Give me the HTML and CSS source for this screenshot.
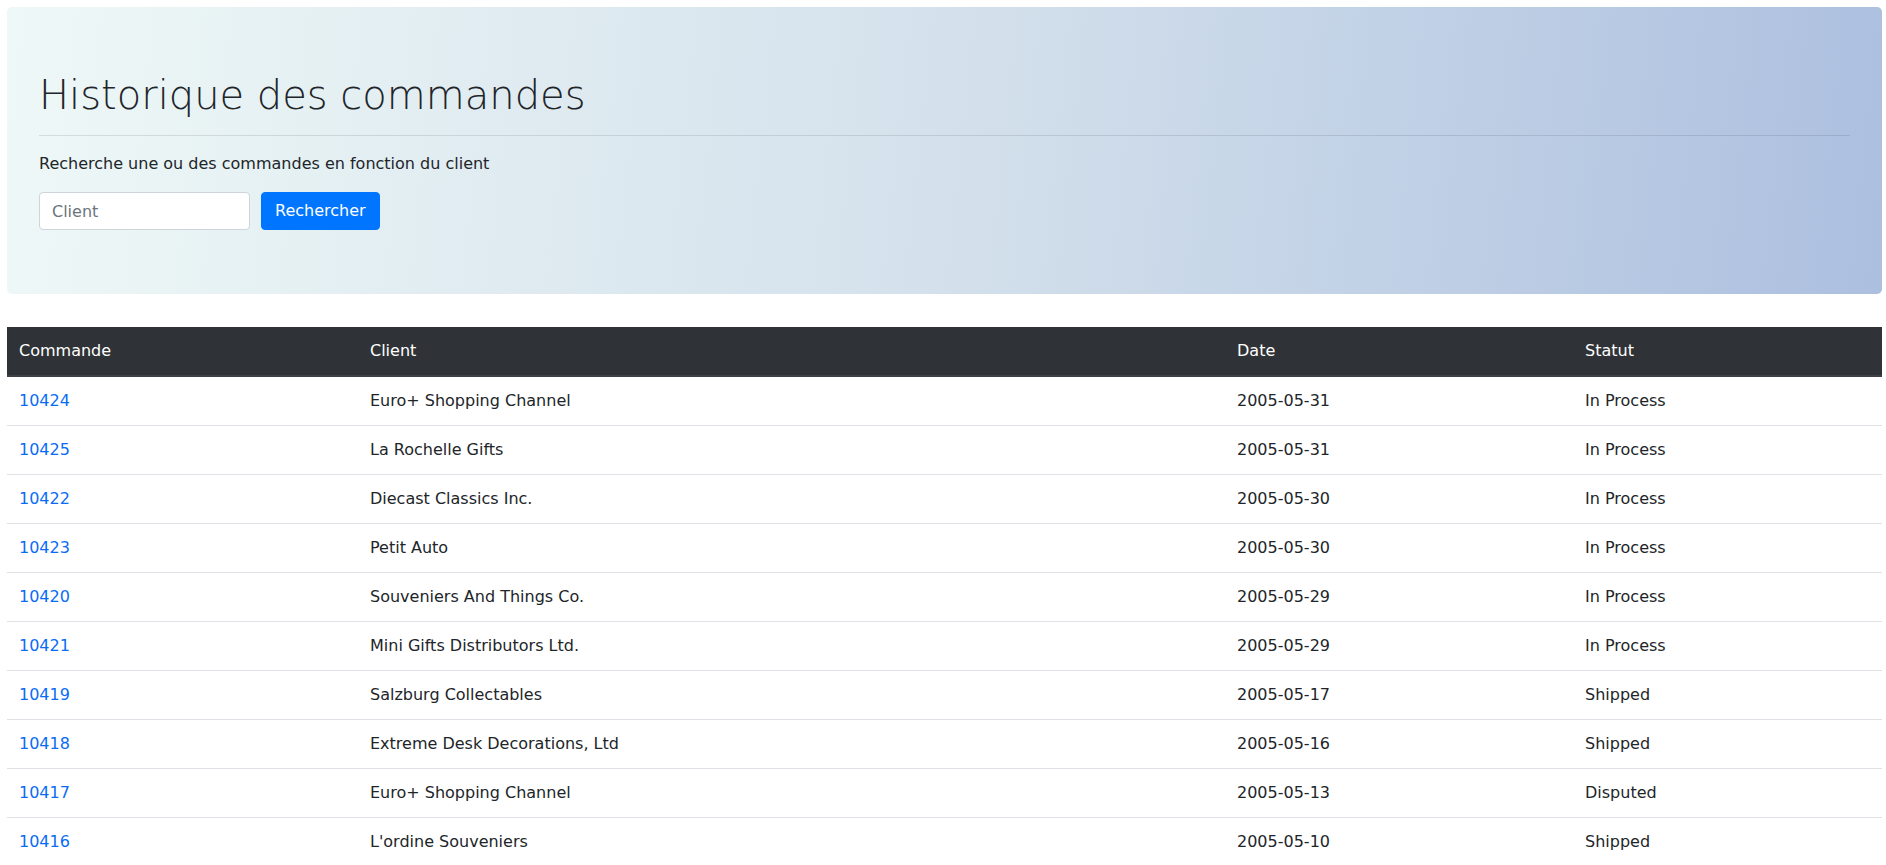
FILE: index.html
```html
<!DOCTYPE html>
<html lang="fr">
<head>
<meta charset="utf-8">
<title>Historique des commandes</title>
<link rel="stylesheet" href="styles.css">
</head>
<body>
<div class="page">
  <section class="jumbotron">
    <h1 class="title">Historique des commandes</h1>
    <hr class="divider">
    <p class="lead-text">Recherche une ou des commandes en fonction du client</p>
    <form class="search">
      <input class="field" type="text" placeholder="Client">
      <button class="btn" type="button">Rechercher</button>
    </form>
  </section>
  <table class="orders">
    <colgroup>
      <col class="c1"><col class="c2"><col class="c3"><col class="c4">
    </colgroup>
    <thead>
      <tr><th>Commande</th><th>Client</th><th>Date</th><th>Statut</th></tr>
    </thead>
    <tbody>
      <tr><td><a href="#">10424</a></td><td>Euro+ Shopping Channel</td><td>2005-05-31</td><td>In Process</td></tr>
      <tr><td><a href="#">10425</a></td><td>La Rochelle Gifts</td><td>2005-05-31</td><td>In Process</td></tr>
      <tr><td><a href="#">10422</a></td><td>Diecast Classics Inc.</td><td>2005-05-30</td><td>In Process</td></tr>
      <tr><td><a href="#">10423</a></td><td>Petit Auto</td><td>2005-05-30</td><td>In Process</td></tr>
      <tr><td><a href="#">10420</a></td><td>Souveniers And Things Co.</td><td>2005-05-29</td><td>In Process</td></tr>
      <tr><td><a href="#">10421</a></td><td>Mini Gifts Distributors Ltd.</td><td>2005-05-29</td><td>In Process</td></tr>
      <tr><td><a href="#">10419</a></td><td>Salzburg Collectables</td><td>2005-05-17</td><td>Shipped</td></tr>
      <tr><td><a href="#">10418</a></td><td>Extreme Desk Decorations, Ltd</td><td>2005-05-16</td><td>Shipped</td></tr>
      <tr><td><a href="#">10417</a></td><td>Euro+ Shopping Channel</td><td>2005-05-13</td><td>Disputed</td></tr>
      <tr><td><a href="#">10416</a></td><td>L'ordine Souveniers</td><td>2005-05-10</td><td>Shipped</td></tr>
    </tbody>
  </table>
</div>
</body>
</html>
```
FILE: styles.css
```css
* { box-sizing: border-box; }
html, body { margin: 0; padding: 0; }
body {
  font-family: "DejaVu Sans", "Open Sans", sans-serif;
  font-size: 16px;
  line-height: 1.5;
  color: #212529;
  background: #fff;
}
.page { padding: 7px 4px 0 7px; }
.jumbotron {
  padding: 64px 32px;
  margin-bottom: 33px;
  border-radius: 5px;
  background: linear-gradient(96deg, #eef8f7 0%, #d4e1ec 50%, #acbfdf 100%);
}
.title {
  margin: 0 0 8px;
  font-size: 40px;
  font-weight: 200;
  line-height: 1.2;
  color: #212529;
}
.divider {
  margin: 16px 0;
  border: 0;
  border-top: 1px solid rgba(0, 0, 0, 0.1);
}
.lead-text { margin: 0 0 16px; }
.search { display: flex; gap: 11px; margin: 0; }
.field {
  width: 211px;
  height: 38px;
  padding: 6px 12px;
  font: inherit;
  color: #495057;
  background: #fff;
  border: 1px solid #ced4da;
  border-radius: 4px;
}
.field::placeholder { color: #6c757d; }
.btn {
  height: 38px;
  padding: 6px 13px;
  font: inherit;
  color: #fff;
  background: #0075ff;
  border: 1px solid #0075ff;
  border-radius: 4px;
}
.orders { width: 100%; border-collapse: collapse; table-layout: fixed; }
.c1 { width: 351px; }
.c2 { width: 867px; }
.c3 { width: 348px; }
.c4 { width: auto; }
.orders th {
  text-align: left;
  font-weight: 400;
  padding: 12px;
  color: #fff;
  background: #2f3337;
  border-bottom: 2px solid #3c4248;
}
.orders td { padding: 12px; border-top: 1px solid #dee2e6; }
.orders tbody tr:first-child td { border-top: 0; }
.orders a { color: #0a6cf5; text-decoration: none; }
```
